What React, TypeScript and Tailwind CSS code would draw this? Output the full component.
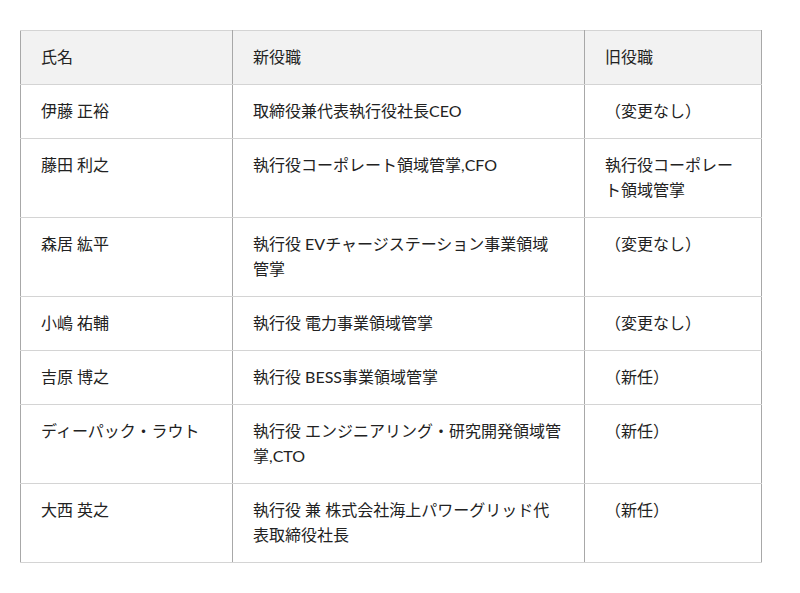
import React from "react";

const rows: [string, string, string][] = [
  ["伊藤 正裕", "取締役兼代表執行役社長CEO", "（変更なし）"],
  ["藤田 利之", "執行役コーポレート領域管掌,CFO", "執行役コーポレート領域管掌"],
  ["森居 紘平", "執行役 EVチャージステーション事業領域管掌", "（変更なし）"],
  ["小嶋 祐輔", "執行役 電力事業領域管掌", "（変更なし）"],
  ["吉原 博之", "執行役 BESS事業領域管掌", "（新任）"],
  ["ディーパック・ラウト", "執行役 エンジニアリング・研究開発領域管掌,CTO", "（新任）"],
  ["大西 英之", "執行役 兼 株式会社海上パワーグリッド代表取締役社長", "（新任）"],
];

export default function App() {
  const cell =
    "border-y border-y-[#d4d4d4] border-x border-x-[#a8a8a8] pl-[20px] pr-[21px] pt-[13px] pb-[15px] align-top text-left font-normal";
  return (
    <div
      className="w-[800px] h-[593px] bg-white pt-[30px] pl-[20px]"
      style={{ fontFamily: '"Lato", "Noto Sans CJK JP", sans-serif' }}
    >
      <table className="w-[741px] border-collapse table-fixed text-[16px] leading-[25px] text-[#222]">
        <colgroup>
          <col className="w-[212px]" />
          <col className="w-[352px]" />
          <col className="w-[177px]" />
        </colgroup>
        <thead>
          <tr className="bg-[#f2f2f2]">
            <th className={cell}>氏名</th>
            <th className={cell}>新役職</th>
            <th className={cell}>旧役職</th>
          </tr>
        </thead>
        <tbody>
          {rows.map((r, i) => (
            <tr key={i}>
              <td className={cell}>{r[0]}</td>
              <td className={cell}>{r[1]}</td>
              <td className={cell}>{r[2]}</td>
            </tr>
          ))}
        </tbody>
      </table>
    </div>
  );
}
